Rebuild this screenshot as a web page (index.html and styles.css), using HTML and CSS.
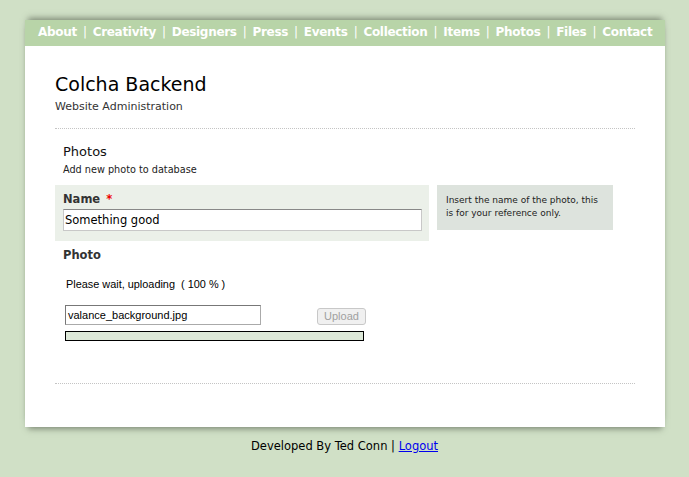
FILE: index.html
```html
<!DOCTYPE html>
<html>
<head>
<meta charset="utf-8">
<link rel="stylesheet" href="styles.css">
</head>
<body>
<div class="page">
  <nav class="nav">
    <a>About</a><span class="sep">|</span>
    <a>Creativity</a><span class="sep">|</span>
    <a>Designers</a><span class="sep">|</span>
    <a>Press</a><span class="sep">|</span>
    <a>Events</a><span class="sep">|</span>
    <a>Collection</a><span class="sep">|</span>
    <a>Items</a><span class="sep">|</span>
    <a>Photos</a><span class="sep">|</span>
    <a>Files</a><span class="sep">|</span>
    <a>Contact</a>
  </nav>
  <div class="content">
    <h1 class="title">Colcha Backend</h1>
    <div class="subtitle">Website Administration</div>
    <div class="rule"></div>
    <div class="section">
      <h2 class="sec-title">Photos</h2>
      <div class="sec-desc">Add new photo to database</div>
    </div>
    <div class="field-row">
      <div class="field">
        <label class="label">Name <span class="req">*</span></label>
        <div class="text-input">Something good</div>
      </div>
      <div class="help">Insert the name of the photo, this is for your reference only.</div>
    </div>
    <div class="photo">
      <div class="label">Photo</div>
      <div class="status">Please wait, uploading &nbsp;( 100 % )</div>
      <div class="upload-row">
        <div class="file-input">valance_background.jpg</div>
        <div class="btn">Upload</div>
      </div>
      <div class="progress"><div class="bar" style="width:100%"></div></div>
    </div>
    <div class="rule rule-bottom"></div>
  </div>
</div>
<div class="footer">Developed By Ted Conn | <a class="logout">Logout</a></div>
</body>
</html>
```
FILE: styles.css
```css
html, body { margin: 0; padding: 0; }
body {
  background: #d0e0c6;
  font-family: "DejaVu Sans", Verdana, sans-serif;
  color: #000;
  padding-top: 20px;
}
.page {
  width: 640px;
  margin-left: 25px;
  background: #fff;
  box-shadow: 0 -5px 6px -3px rgba(60,70,55,0.55), 0 5px 6px -3px rgba(60,70,55,0.55);
}
.nav {
  height: 26px;
  box-sizing: border-box;
  padding-bottom: 2px;
  background: #b8d4a8;
  display: flex;
  align-items: center;
  padding-left: 13px;
  color: #fff;
  font-weight: bold;
  font-size: 12px;
  letter-spacing: -0.3px;
}
.nav a { color: #fff; }
.nav .sep { font-weight: normal; margin: 0 6px 0 6px; }
.content { padding: 27px 30px 0 30px; }
.title {
  margin: 0;
  font-weight: normal;
  font-size: 19px;
  line-height: 22px;
  color: #000;
}
.subtitle {
  font-size: 11px;
  color: #333;
  margin-top: 5px;
  line-height: 14px;
}
.rule {
  border-top: 1px dotted #c4c4c4;
  margin-top: 14px;
}
.section { padding: 15px 8px 0 8px; }
.sec-title {
  margin: 0;
  font-weight: normal;
  font-size: 13px;
  line-height: 16px;
  color: #111;
}
.sec-desc { font-size: 9.7px; color: #222; margin-top: 4px; line-height: 12px; }
.field-row { display: flex; align-items: flex-start; margin-top: 9px; gap: 8px; }
.field {
  width: 359px;
  background: #ebf0e9;
  padding: 6px 7px 10px 8px;
}
.label { display: block; font-weight: bold; font-size: 11.5px; color: #333; line-height: 16px; }
.req { color: #e00; margin-left: 2px; }
.text-input {
  margin-top: 2px;
  height: 20px;
  border: 1px solid #c8c8c8;
  border-top-color: #888;
  background: #fff;
  font-size: 11.5px;
  line-height: 20px;
  padding-left: 1px;
  color: #000;
}
.help {
  width: 158px;
  background: #dde3dd;
  font-size: 9px;
  color: #222;
  line-height: 13px;
  padding: 9px 9px 10px 9px;
}
.photo { padding: 6px 8px 0 8px; }
.status {
  font-family: "Liberation Sans", Arial, sans-serif;
  font-size: 10.9px;
  margin-top: 15px;
  margin-left: 3px;
  line-height: 13px;
}
.upload-row { display: flex; align-items: flex-end; margin-top: 14px; margin-left: 2px; }
.file-input {
  width: 192px;
  height: 18px;
  border: 1px solid #aaa;
  border-top-color: #777;
  border-left-color: #777;
  font-family: "Liberation Sans", Arial, sans-serif;
  font-size: 11px;
  line-height: 18px;
  padding-left: 2px;
}
.btn {
  margin-left: 56px;
  width: 47px;
  height: 15px;
  border: 1px solid #c8c8c8;
  border-radius: 3px;
  background: #f0f0f0;
  color: #a0a0a0;
  font-family: "Liberation Sans", Arial, sans-serif;
  font-size: 11px;
  line-height: 15px;
  text-align: center;
}
.progress {
  margin-top: 6px;
  margin-left: 2px;
  width: 297px;
  height: 8px;
  border: 1px solid #000;
  background: #fff;
}
.bar { height: 100%; background: #dde8d8; }
.rule-bottom { margin-top: 42px; height: 43px; }
.footer {
  text-align: center;
  font-size: 11.5px;
  margin-top: 12px;
  color: #000;
}
.logout { color: #00e; text-decoration: underline; }
```
